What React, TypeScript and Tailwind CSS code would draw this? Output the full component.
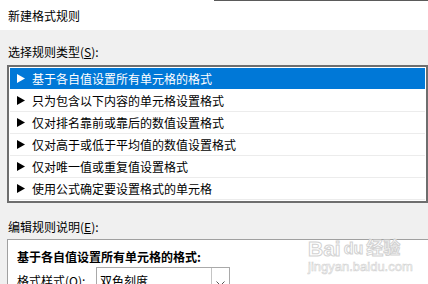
const rules = [
  '基于各自值设置所有单元格的格式',
  '只为包含以下内容的单元格设置格式',
  '仅对排名靠前或靠后的数值设置格式',
  '仅对高于或低于平均值的数值设置格式',
  '仅对唯一值或重复值设置格式',
  '使用公式确定要设置格式的单元格',
];

function Triangle({ white }: { white?: boolean }) {
  return (
    <svg width="8" height="9" viewBox="0 0 8 9" className="shrink-0">
      <polygon points="0,0 8,4.5 0,9" fill={white ? '#ffffff' : '#000000'} />
    </svg>
  );
}

export default function App() {
  return (
    <div className="relative w-[428px] h-[284px] overflow-hidden bg-[#f0f0f0] text-[12px] text-black font-['Noto_Sans_CJK_SC',sans-serif]">
      {/* Title bar */}
      <div className="h-[30px] bg-white flex flex-col">
        <div className="flex h-px">
          <div className="w-[214px]" />
          <div className="flex-1 bg-[#5a5a5a]" />
        </div>
        <div className="flex-1 flex items-center pl-[8px] leading-[16px]">新建格式规则</div>
      </div>

      {/* Rule type */}
      <div className="pl-[7px]">
        <div className="mt-[14px] pl-px leading-[16px]">
          选择规则类型(<span className="underline">S</span>):
        </div>
        <div className="mt-[5px] border-2 border-[#6e6e6e] bg-white p-px">
          {rules.map((r, i) => (
            <div
              key={r}
              className={`h-[22px] flex items-center gap-[7px] pl-[7px] border-b leading-[16px] ${
                i === 0 ? 'bg-[#0078d7] text-white border-white' : 'border-[#ececec]'
              }`}
            >
              <Triangle white={i === 0} />
              <span>{r}</span>
            </div>
          ))}
        </div>

        <div className="mt-[16px] pl-px leading-[16px]">
          编辑规则说明(<span className="underline">E</span>):
        </div>
        <div className="mt-[4px] h-[60px] border-t border-l border-[#a0a0a0] bg-white pl-[9px] pt-[9px]">
          <div className="font-bold leading-[16px]">基于各自值设置所有单元格的格式:</div>
          <div className="mt-[2px] flex items-start">
            <div className="w-[79px] pt-[6px] leading-[16px]">
              格式样式(<span className="underline">O</span>):
            </div>
            <div className="w-[134px] h-[22px] border border-[#a9a9a9] flex">
              <div className="flex-1 pl-[3px] pt-[5px] leading-[16px]">双色刻度</div>
              <div className="w-[18px] border-l border-[#c4c4c4] flex items-end justify-center pb-[1px]">
                <svg width="9" height="6" viewBox="0 0 9 6">
                  <polyline points="0.5,0.5 4.5,4.5 8.5,0.5" fill="none" stroke="#555" strokeWidth="1" />
                </svg>
              </div>
            </div>
          </div>
        </div>
      </div>

      {/* Baidu watermark */}
      <div className="absolute left-[308px] top-[238px] flex flex-col items-start pointer-events-none">
        <div className="flex items-end gap-[3px] text-[21px] leading-[22px] font-bold text-white [-webkit-text-stroke:1px_#d2d2d2] font-['Liberation_Sans','Noto_Sans_CJK_SC',sans-serif]">
          <span>Bai</span>
          <span className="text-[16px]">du</span>
          <span className="text-[17px]">经验</span>
        </div>
        <div className="text-[13px] leading-[14px] text-white [-webkit-text-stroke:0.6px_#d2d2d2] font-['Liberation_Sans',sans-serif]">
          jingyan.baidu.com
        </div>
      </div>
    </div>
  );
}
